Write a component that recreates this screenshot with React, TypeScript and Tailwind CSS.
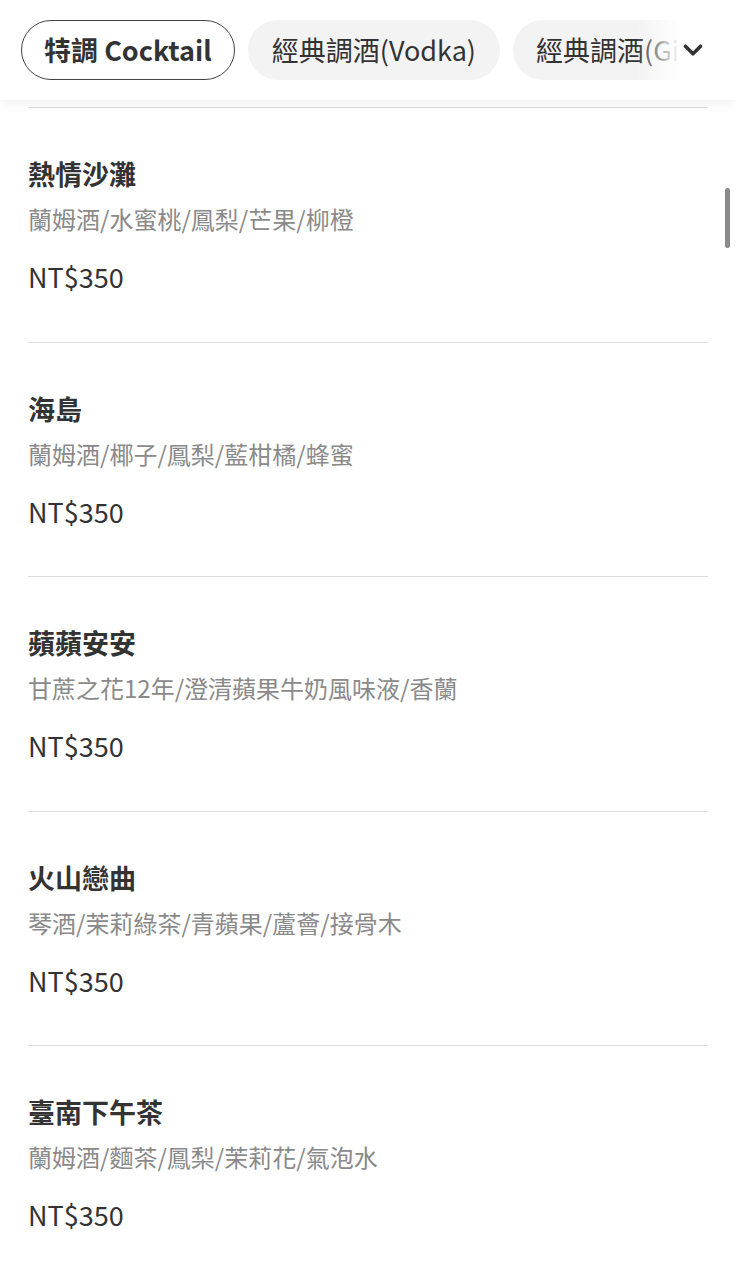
import React from "react";

const items = [
  { name: "熱情沙灘", desc: "蘭姆酒/水蜜桃/鳳梨/芒果/柳橙", price: "NT$350" },
  { name: "海島", desc: "蘭姆酒/椰子/鳳梨/藍柑橘/蜂蜜", price: "NT$350" },
  { name: "蘋蘋安安", desc: "甘蔗之花12年/澄清蘋果牛奶風味液/香蘭", price: "NT$350" },
  { name: "火山戀曲", desc: "琴酒/茉莉綠茶/青蘋果/蘆薈/接骨木", price: "NT$350" },
  { name: "臺南下午茶", desc: "蘭姆酒/麵茶/鳳梨/茉莉花/氣泡水", price: "NT$350" },
];

export default function App() {
  return (
    <div
      className="relative w-[736px] h-[1280px] overflow-hidden bg-white text-[#333]"
      style={{ fontFamily: '"Noto Sans CJK TC", "Noto Sans", sans-serif' }}
    >
      <div className="relative z-10 h-[100px] bg-white shadow-[0_4px_10px_rgba(0,0,0,0.06)]">
        <div className="flex items-center gap-[13px] pl-[21px] pt-[20px] overflow-hidden whitespace-nowrap">
          <div className="shrink-0 h-[60px] flex items-center px-[22px] rounded-full border-[1.5px] border-[#444] text-[27px] font-bold text-[#333]">
            特調 Cocktail
          </div>
          <div className="shrink-0 h-[60px] flex items-center px-[24px] rounded-full bg-[#f3f3f3] text-[27px] text-[#333]">
            經典調酒(Vodka)
          </div>
          <div className="shrink-0 h-[60px] flex items-center px-[23px] rounded-full bg-[#f3f3f3] text-[27px] text-[#333]">
            經典調酒(Gin)
          </div>
        </div>
        <div className="absolute right-0 top-0 h-[100px] w-[100px] flex items-center">
          <div className="h-full w-[44px] bg-gradient-to-r from-white/0 to-white" />
          <div className="h-full flex-1 bg-white flex items-center">
            <svg width="26" height="26" viewBox="0 0 24 24" fill="none" stroke="#333" strokeWidth="3.2" strokeLinecap="round" strokeLinejoin="round">
              <path d="M5 8.5l7 7 7-7" />
            </svg>
          </div>
        </div>
      </div>

      <div className="px-[28px] pt-[7px]">
        <div className="border-t border-[#dcdcdc]" />
        {items.map((it) => (
          <div key={it.name} className="border-b border-[#dcdcdc] pt-[48px] pb-[46.5px]">
            <div className="text-[27px] leading-[36px] font-bold text-[#333]">{it.name}</div>
            <div className="mt-[9px] text-[24px] leading-[36px] text-[#8a8a8a]">{it.desc}</div>
            <div className="mt-[22px] text-[27px] leading-[36px] text-[#333]">{it.price}</div>
          </div>
        ))}
      </div>

      <div className="absolute right-[6px] top-[188px] h-[60px] w-[5px] rounded-full bg-[#8a8a8a]" />
    </div>
  );
}
